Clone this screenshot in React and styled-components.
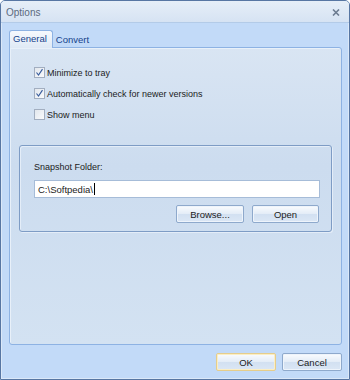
import React from "react";
import styled, { createGlobalStyle } from "styled-components";

const GlobalStyle = createGlobalStyle`
  html, body {
    margin: 0;
    padding: 0;
    background: #ffffff;
  }
  body {
    font-family: "Liberation Sans", Arial, sans-serif;
    font-size: 9px;
    color: #1b1b1b;
  }
  * {
    box-sizing: border-box;
  }
`;

const Window = styled.div`
  width: 350px;
  height: 380px;
  border: 1px solid #5776a3;
  border-radius: 5px 5px 0 0;
  background: #c2daf8;
  box-shadow: inset 1px 0 0 #dbe8f8, inset -1px 0 0 #dbe8f8, inset 0 -1px 0 #dbe8f8;
  display: flex;
  flex-direction: column;
  overflow: hidden;
`;

const TitleBar = styled.div`
  height: 22px;
  flex: none;
  display: flex;
  align-items: center;
  justify-content: space-between;
  padding: 1px 9px 0 5px;
  background: linear-gradient(#e6eef8, #d6e3f3);
  border-bottom: 1px solid #b3cbe8;
`;

const Title = styled.span`
  font-size: 10px;
  color: #5b6a7e;
`;

const Body = styled.div`
  flex: 1;
  display: flex;
  flex-direction: column;
  padding: 7px 7px 8px 8px;
`;

const TabStrip = styled.div`
  height: 17px;
  display: flex;
  align-items: flex-end;
  position: relative;
  z-index: 1;
`;

const Tab = styled.div`
  height: ${(p) => (p.$active ? "18px" : "16px")};
  margin-bottom: ${(p) => (p.$active ? "-1px" : "0")};
  padding: 0 ${(p) => (p.$active ? "5px" : "4px")} 0 ${(p) => (p.$active ? "3px" : "2px")};
  display: flex;
  align-items: center;
  color: #15428b;
  font-size: 9.5px;
  border: ${(p) => (p.$active ? "1px solid #8db2e3" : "1px solid transparent")};
  border-bottom: none;
  border-radius: 3px 3px 0 0;
  background: ${(p) => (p.$active ? "linear-gradient(#f6f9fd, #dfe9f5)" : "transparent")};
  padding-bottom: ${(p) => (p.$active ? "3px" : "0")};
`;

const Panel = styled.div`
  flex: 1;
  border: 1px solid #8db2e3;
  border-radius: 0 3px 3px 3px;
  background: linear-gradient(#d9e5f3, #ccdcef 40%, #d3e2f2);
  box-shadow: inset 1px 1px 0 #e8f0f9;
  padding: 18px 9px 0 9px;
  display: flex;
  flex-direction: column;
`;

const Checks = styled.div`
  display: flex;
  flex-direction: column;
  gap: 8px;
  padding-left: 15px;
`;

const CheckRow = styled.label`
  display: flex;
  align-items: center;
  gap: 2px;
  height: 13px;
`;

const Box = styled.span`
  width: 11px;
  height: 11px;
  border: 1px solid #a2aec0;
  background: linear-gradient(135deg, #e2e7ed, #f9fafc);
  display: flex;
  align-items: center;
  justify-content: center;
`;

const Group = styled.div`
  margin-top: 24px;
  height: 87px;
  border: 1px solid #7e9cc5;
  border-radius: 3px;
  box-shadow: inset 1px 1px 0 #e4edf8, 1px 1px 0 #e4edf8;
  padding: 16px 11px 0 14px;
  display: flex;
  flex-direction: column;
`;

const GroupLabel = styled.div`
  height: 11px;
  line-height: 11px;
`;

const TextField = styled.div`
  margin-top: 7px;
  height: 18px;
  border: 1px solid #a6bcd8;
  background: #ffffff;
  display: flex;
  align-items: center;
  padding-left: 3px;
  font-size: 9.5px;
`;

const Caret = styled.span`
  display: inline-block;
  width: 1px;
  height: 12px;
  background: #000;
  margin-left: 1px;
`;

const ButtonRow = styled.div`
  margin-top: 7px;
  display: flex;
  justify-content: flex-end;
  gap: 8px;
  padding-right: 1px;
`;

const Button = styled.button`
  width: ${(p) => p.$w || 60}px;
  height: 18px;
  padding: 0;
  font-family: inherit;
  font-size: 9.5px;
  color: #1b1b1b;
  border: 1px solid ${(p) => (p.$default ? "#e5cd8c" : "#8ea9cc")};
  border-radius: 2px;
  background: linear-gradient(#fafcfe, #e3ecf7 50%, #d2e0f1 51%, #dbe7f5);
  box-shadow: inset 0 0 0 1px ${(p) => (p.$default ? "#fbeec4" : "#eef4fb")};
`;

const Footer = styled.div`
  flex: none;
  display: flex;
  justify-content: flex-end;
  gap: 6px;
  margin-top: 8px;
`;

function CheckMark() {
  return (
    <svg width="9" height="9" viewBox="0 0 9 9">
      <path d="M1.5 4.5 L3.5 7 L7.5 1.2" fill="none" stroke="#3a5e9e" strokeWidth="1.2" />
    </svg>
  );
}

function Check({ checked, children }) {
  return (
    <CheckRow>
      <Box>{checked && <CheckMark />}</Box>
      {children}
    </CheckRow>
  );
}

export default function App() {
  return (
    <>
      <GlobalStyle />
      <Window>
        <TitleBar>
          <Title>Options</Title>
          <svg width="8" height="7" viewBox="0 0 8 7">
            <path d="M1 0.5 L7 6.5 M7 0.5 L1 6.5" stroke="#6d7c91" strokeWidth="1.6" />
          </svg>
        </TitleBar>
        <Body>
          <TabStrip>
            <Tab $active>General</Tab>
            <Tab>Convert</Tab>
          </TabStrip>
          <Panel>
            <Checks>
              <Check checked>Minimize to tray</Check>
              <Check checked>Automatically check for newer versions</Check>
              <Check>Show menu</Check>
            </Checks>
            <Group>
              <GroupLabel>Snapshot Folder:</GroupLabel>
              <TextField>
                C:\Softpedia\
                <Caret />
              </TextField>
              <ButtonRow>
                <Button $w={68}>Browse...</Button>
                <Button $w={67}>Open</Button>
              </ButtonRow>
            </Group>
          </Panel>
          <Footer>
            <Button $default>OK</Button>
            <Button>Cancel</Button>
          </Footer>
        </Body>
      </Window>
    </>
  );
}
